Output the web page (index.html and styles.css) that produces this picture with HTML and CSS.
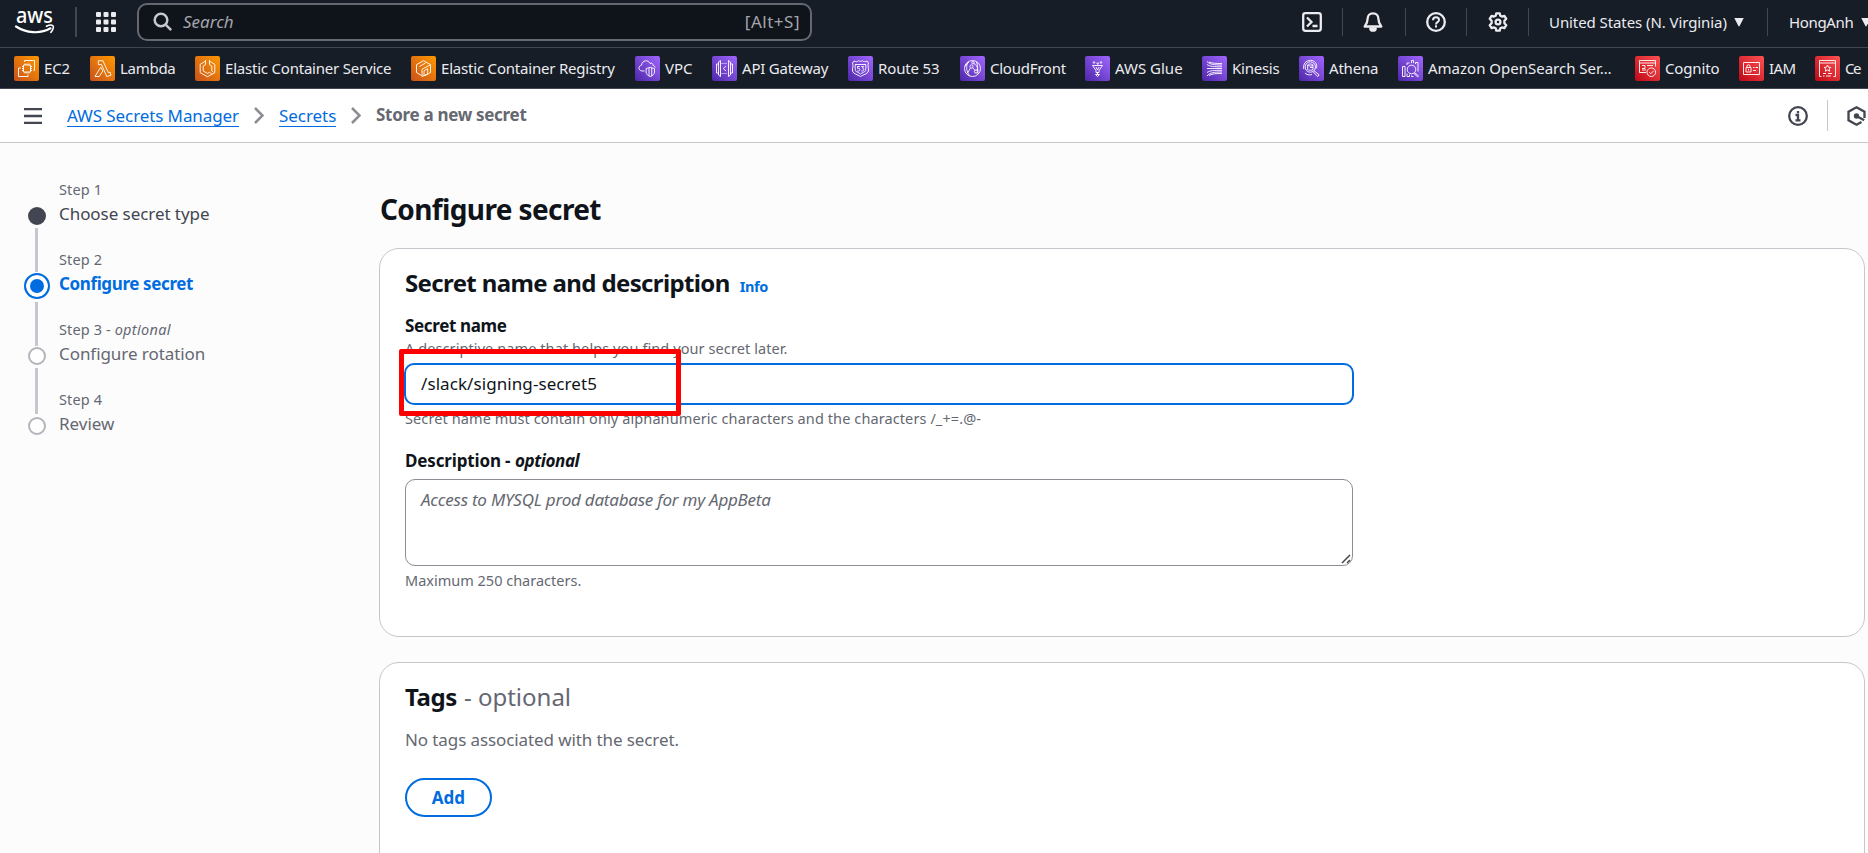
FILE: index.html
```
<!DOCTYPE html>
<html lang="en">
<head>
<meta charset="utf-8">
<title>Store a new secret | AWS Secrets Manager</title>
<link rel="stylesheet" href="styles.css">
</head>
<body>
<header class="topbar">
  <svg class="logo" width="41" height="28" viewBox="0 0 41 28"><text class="logo-text" x="1" y="15" textLength="37" lengthAdjust="spacingAndGlyphs">aws</text><path d="M1 18.5C11 25 25 26.500 35.500 20.300" fill="none" stroke="#fff" stroke-width="2.200" stroke-linecap="round"/><path d="M31.500 18.300C34 17 37 17 38 17.800S37.800 22.500 35.800 24.300" fill="none" stroke="#fff" stroke-width="1.600" stroke-linecap="round"/></svg>
  <span class="logo-divider"></span>
  <svg class="apps" width="20" height="20" viewBox="0 0 20 20" fill="#ebebf0"><rect width="5" height="5" rx="1"/><rect x="7.500" width="5" height="5" rx="1"/><rect x="15" width="5" height="5" rx="1"/><rect y="7.500" width="5" height="5" rx="1"/><rect x="7.500" y="7.500" width="5" height="5" rx="1"/><rect x="15" y="7.500" width="5" height="5" rx="1"/><rect y="15" width="5" height="5" rx="1"/><rect x="7.500" y="15" width="5" height="5" rx="1"/><rect x="15" y="15" width="5" height="5" rx="1"/></svg>
  <div class="search">
    <svg width="20" height="20" viewBox="0 0 20 20" fill="none" stroke="#c6c6cd" stroke-width="2.500"><circle cx="8" cy="8" r="6.300"/><path d="M12.600 12.600l5.600 5.600"/></svg>
    <span class="search-hint">Search</span>
    <span class="search-key">[Alt+S]</span>
  </div>
  <div class="tools">
    <span class="tool tool-shell"><svg width="20" height="20" viewBox="0 0 20 20" fill="none" stroke="#ebebf0" stroke-width="2.300"><rect x="1.200" y="1.200" width="17.600" height="17.600" rx="2.200"/><path d="M5 5.500l4.500 4.500L5 14.500M10.500 14h5"/></svg></span>
    <span class="tool tool-bell"><svg width="20" height="20" viewBox="0 0 20 20" fill="none" stroke="#ebebf0" stroke-width="2.300" stroke-linejoin="round"><path d="M10 1.300c-3.600 0-5.400 2.600-5.400 5.500 0 4-.8 5.200-2.900 7.700h16.600c-2.100-2.500-2.900-3.700-2.900-7.700 0-2.900-1.800-5.500-5.400-5.500z"/><path d="M7.300 16.500a2.700 2.200 0 0 0 5.400 0z"/></svg></span>
    <span class="tool tool-help"><svg width="20" height="20" viewBox="0 0 20 20" fill="none" stroke="#ebebf0" stroke-width="2.300"><circle cx="10" cy="10" r="8.800"/><path d="M7 8.200c0-1.900 1.300-2.900 3-2.900s3 1 3 2.600c0 2.200-3 2.200-3 4.500M10 13.300v2.200" stroke-width="2"/></svg></span>
    <span class="tool tool-gear"><svg width="20" height="20" viewBox="0 0 20 20" fill="none" stroke="#ebebf0" stroke-width="2.300" stroke-linejoin="round"><path d="M8.300 1.300h3.400l.6 2.400 1.600.9 2.500-.8 1.900 3-1.900 2v2.400l1.900 2-1.900 3-2.500-.8-1.600.9-.6 2.400H8.300l-.6-2.400-1.600-.9-2.500.8-1.900-3 1.900-2V8.800l-1.900-2 1.900-3 2.500.8 1.600-.9z"/><circle cx="10" cy="10" r="2.400"/></svg></span>
    <span class="tool tool-region"><span class="region-name">United States (N. Virginia)</span><svg width="10" height="9" viewBox="0 0 10 9" fill="#ebebf0"><path d="M.3 0h9.400L5.500 8.300h-1z"/></svg></span>
    <span class="tool tool-account"><span class="account-name">HongAnh</span><svg width="10" height="9" viewBox="0 0 10 9" fill="#ebebf0"><path d="M.3 0h9.400L5.500 8.300h-1z"/></svg></span>
  </div>
</header>

<nav class="services">
  <svg class="defs" width="0" height="0"><defs>
    <linearGradient id="orange" x1="0" y1="1" x2="1" y2="0"><stop offset="0" stop-color="#c8511b"/><stop offset="1" stop-color="#ff9900"/></linearGradient>
    <linearGradient id="purple" x1="0" y1="1" x2="1" y2="0"><stop offset="0" stop-color="#4d27a8"/><stop offset="1" stop-color="#a166ff"/></linearGradient>
    <linearGradient id="red" x1="0" y1="1" x2="1" y2="0"><stop offset="0" stop-color="#bd0816"/><stop offset="1" stop-color="#ff5252"/></linearGradient>
  </defs></svg>
  <span class="svc svc-ec2"><svg class="tile" viewBox="0 0 25 25"><rect width="25" height="25" rx="2" fill="url(#orange)"/><path d="M9.500 9h7v7h-7zM11 9V7.500M13 9V7.500M15 9V7.500M11 17.500V16M13 17.500V16M15 17.500V16M8 10.500h1.500M8 12.500h1.500M8 14.500h1.500M16.500 10.500H18M16.500 12.500H18M16.500 14.500H18M10.500 6V4.500h10v10H19.500M7 12H4.500v8.500H14V18.500"/></svg><span>EC2</span></span>
  <span class="svc svc-lambda"><svg class="tile" viewBox="0 0 25 25"><rect width="25" height="25" rx="2" fill="url(#orange)"/><path d="M8.300 4.700h4.600l5.500 12 1.600-.6 1 3-4.200 1.500-5.300-12H8.300zM10.700 11.200L5 20.500h4.200l3.700-5.600z"/></svg><span>Lambda</span></span>
  <span class="svc svc-ecs"><svg class="tile" viewBox="0 0 25 25"><rect width="25" height="25" rx="2" fill="url(#orange)"/><path d="M10.500 5.200L5.200 8.300v8.400l7.300 4 7.300-4M14.500 5.200l5.300 3.100v8.400M10.500 4v4.700L8.200 10v5l4.300 2.400 2-1.100M14.500 4v4.700l2.300 1.300v5l1.500 1.200M14.500 16.300l2.300 1.800"/></svg><span>Elastic Container Service</span></span>
  <span class="svc svc-ecr"><svg class="tile" viewBox="0 0 25 25"><rect width="25" height="25" rx="2" fill="url(#orange)"/><path d="M10.500 19.500l-5-3V8.700l7-4 7 4-8.500 4.600v7.200l2-.8v-5l3.700-2v5l-3.700 2M19.500 8.700v7.800l-5.500 3.200M8.500 10.500l6-3.500"/></svg><span>Elastic Container Registry</span></span>
  <span class="svc svc-vpc"><svg class="tile" viewBox="0 0 25 25"><rect width="25" height="25" rx="2" fill="url(#purple)"/><path d="M9.500 15H7c-4-.5-4-5-.5-5.800C7 4 13.500 3.300 15 7.500c1.600-1 3.200 0 3 2 1 .2 2 .8 2.200 2M15.300 11.300l4.200 1.300V16c0 2-1.700 3.600-4.200 4.600-2.500-1-4.200-2.600-4.200-4.600v-3.400zM14 12v8M16.700 12v8"/></svg><span>VPC</span></span>
  <span class="svc svc-api"><svg class="tile" viewBox="0 0 25 25"><rect width="25" height="25" rx="2" fill="url(#purple)"/><path d="M8.500 4.500v16L6.500 19V6zM16.500 4.500v16l2-1.500V6zM6.500 8H4.500v9h2M18.500 8h2v9h-2M14 10l-2.700 2.500L14 15"/><path d="M9.500 7.500h6M9.500 17.500h6" stroke-dasharray="1 1"/></svg><span>API Gateway</span></span>
  <span class="svc svc-r53"><svg class="tile" viewBox="0 0 25 25"><rect width="25" height="25" rx="2" fill="url(#purple)"/><path d="M6 5c2 1 3.500.8 4.500-.3 1.300.8 2.700.8 4 0C15.500 5.800 17 6 19 5l1.500 2c-1.500 3 .5 5 0 8-.8 3-5 3.500-8 5.500-3-2-7.200-2.500-8-5.500-.5-3 1.500-5 0-8zM7 8.500h11M7.500 8.500c-1 3 .3 4.500-.3 6 1 1.500 3.500 2 5.300 3.500 1.800-1.500 4.300-2 5.300-3.500-.6-1.500.7-3-.3-6M11.800 10.500H9.500v1.800h1.300c1.500 0 1.500 2.700-.3 2.700H9.200M13.300 10.500h2.200l-1 1.700c1.800 0 1.500 2.800-.2 2.800h-1"/></svg><span>Route 53</span></span>
  <span class="svc svc-cf"><svg class="tile" viewBox="0 0 25 25"><rect width="25" height="25" rx="2" fill="url(#purple)"/><circle cx="12.500" cy="12.500" r="8"/><circle cx="11.500" cy="10.500" r="1.600"/><circle cx="16" cy="15.500" r="1.600"/><circle cx="13" cy="6.700" r="1.200"/><path d="M8 6c-2 4-2 9 1.500 13.500M10.500 12l-3 5M12.500 11.700l2.600 2.700M14 7.500c3 2 4.500 5 3.700 10M5 10l4-4M17 15c1-3 .5-6-.5-9"/></svg><span>CloudFront</span></span>
  <span class="svc svc-glue"><svg class="tile" viewBox="0 0 25 25"><rect width="25" height="25" rx="2" fill="url(#purple)"/><path d="M7.500 9.500h10l-3.500 5v2h-3v-2zM12.500 16.500V19M10.500 18.500h4l-2 2z"/><circle cx="9" cy="6.500" r=".8"/><circle cx="12.700" cy="7.500" r=".8"/><circle cx="16" cy="6.500" r=".8"/><path d="M11 11l1.500 3 1.500-3"/></svg><span>AWS Glue</span></span>
  <span class="svc svc-kin"><svg class="tile" viewBox="0 0 25 25"><rect width="25" height="25" rx="2" fill="url(#purple)"/><path d="M5 5.500c3 3 7 3.500 15 3.500M5 8.500c3 2 7 2.300 15 2.300M5 12.500h15M5 16.500c3-2 7-2.200 15-2.200M5 20c3-3.500 7-4 15-4M7 6c4 1.500 7 1.500 13 1.500M7 19.500c4-2 7-2 13-2"/></svg><span>Kinesis</span></span>
  <span class="svc svc-ath"><svg class="tile" viewBox="0 0 25 25"><rect width="25" height="25" rx="2" fill="url(#purple)"/><circle cx="11.300" cy="11" r="5.200"/><path d="M15 14.700l5.200 4.200-1.600 1.600-4.600-4.800M4.700 13c-1-5 2.300-8.700 6.800-8.700 4.500 0 7.200 4 6 8M6 17c2 2 5 2.300 7 1.500"/><ellipse cx="11.300" cy="9" rx="2.700" ry="1"/><path d="M8.600 9v4.500c1 1 4.400 1 5.400 0V9M11 11.500h3"/></svg><span>Athena</span></span>
  <span class="svc svc-os"><svg class="tile" viewBox="0 0 25 25"><rect width="25" height="25" rx="2" fill="url(#purple)"/><circle cx="13.500" cy="13.500" r="4.300"/><path d="M16.600 16.700l4 3.200-1 1-3.700-3.500M4.500 10.500h2.500v10H4.500zM9 9V7h2.500M13.500 7V4.500h2V7M17.500 8V6.500h2.500v9M9 17.500v3h2.500v-2M13.500 19.500v1h2"/></svg><span>Amazon OpenSearch Ser…</span></span>
  <span class="svc svc-cog"><svg class="tile" viewBox="0 0 25 25"><rect width="25" height="25" rx="2" fill="url(#red)"/><path d="M11 16.500H4.500v-12h16v6M4.500 7h16M7 9.500h3v3H7M12 9.500h6M7 14h4"/><circle cx="16.300" cy="16.200" r="4.300"/><path d="M14.200 16.200l1.600 1.600 2.800-3"/></svg><span>Cognito</span></span>
  <span class="svc svc-iam"><svg class="tile" viewBox="0 0 25 25"><rect width="25" height="25" rx="2" fill="url(#red)"/><path d="M4.500 6.500h16v12h-16zM7 11.500h5v4.500H7zM8 11.500V10c0-1.700 3-1.700 3 0v1.500M9.500 13v1.500M14 11.500h1.500M16.500 11.500H19M14 14.500h3"/></svg><span>IAM</span></span>
  <span class="svc svc-cert"><svg class="tile" viewBox="0 0 25 25"><rect width="25" height="25" rx="2" fill="url(#red)"/><path d="M6.500 20.500h-2v-16h16v16h-2M4.500 7h16M12.500 9l1 2.200 2.400.2-1.800 1.600.6 2.300-2.200-1.300-2.200 1.300.6-2.300L9.100 11.400l2.400-.2zM8 17.500h3M13 17.500h4M8 20h1.500M11 20h5"/></svg><span>Ce</span></span>
</nav>

<div class="crumbbar">
  <svg class="menu" width="18" height="16" viewBox="0 0 18 16"><path d="M0 1.200h18M0 8h18M0 14.800h18" stroke="#424650" stroke-width="2.300"/></svg>
  <a class="crumb crumb-root">AWS Secrets Manager</a>
  <svg class="chev" width="10" height="17" viewBox="0 0 10 17"><path d="M1 1l7.500 7.500L1 16" fill="none" stroke="#8c8c94" stroke-width="2.500"/></svg>
  <a class="crumb crumb-mid">Secrets</a>
  <svg class="chev" width="10" height="17" viewBox="0 0 10 17"><path d="M1 1l7.500 7.500L1 16" fill="none" stroke="#8c8c94" stroke-width="2.500"/></svg>
  <span class="crumb-current">Store a new secret</span>
  <div class="panel-tools">
    <svg width="20" height="20" viewBox="0 0 20 20" fill="none" stroke="#424650" stroke-width="2.300"><circle cx="10" cy="10" r="8.800"/><path d="M7.500 9H10v5.500M7.500 14.300h5M10 5v2.300"/></svg>
    <span class="panel-divider"></span>
    <svg width="19" height="20" viewBox="0 0 19 20" fill="none" stroke="#424650" stroke-width="2.300"><path d="M17.500 12V5.700L9.500 1.300l-8 4.400v8.600l8 4.400 5-2.700"/><circle cx="9.500" cy="10" r="2.700" fill="#424650" stroke="none"/><path d="M9.500 10l7.700 4.300"/></svg>
  </div>
</div>

<div class="page">
  <ol class="steps">
    <li class="step step-done"><span class="rail"><i class="dot"></i><i class="line"></i></span><span class="step-body"><small>Step 1</small><b>Choose secret type</b></span></li>
    <li class="step step-active"><span class="rail"><i class="dot"></i><i class="line"></i></span><span class="step-body"><small>Step 2</small><b>Configure secret</b></span></li>
    <li class="step"><span class="rail"><i class="dot"></i><i class="line"></i></span><span class="step-body"><small>Step 3 - <em>optional</em></small><b>Configure rotation</b></span></li>
    <li class="step"><span class="rail"><i class="dot"></i></span><span class="step-body"><small>Step 4</small><b class="review">Review</b></span></li>
  </ol>
  <main class="content">
    <h1>Configure secret</h1>
    <section class="card card-name">
      <h2><span>Secret name and description</span><a class="info">Info</a></h2>
      <div class="label">Secret name</div>
      <div class="hint">A descriptive name that helps you find your secret later.</div>
      <div class="input"><span>/slack/signing-secret5</span><div class="marker"></div></div>
      <div class="hint constraint">Secret name must contain only alphanumeric characters and the characters /_+=.@-</div>
      <div class="label label-desc"><span>Description - </span><em>optional</em></div>
      <div class="textarea"><span>Access to MYSQL prod database for my AppBeta</span><svg class="grip" width="10" height="10" viewBox="0 0 10 10"><path d="M1 9l8-8M6 9l3-3" stroke="#444" stroke-width="1.500"/></svg></div>
      <div class="hint maximum">Maximum 250 characters.</div>
    </section>
    <section class="card card-tags">
      <h2><span class="tags-title">Tags</span><span class="tags-opt">- optional</span></h2>
      <p class="empty">No tags associated with the secret.</p>
      <span class="btn">Add</span>
    </section>
  </main>
</div>
</body>
</html>
```
FILE: styles.css
```
* { box-sizing: border-box; }
body {
  margin: 0; height: 853px; overflow: hidden; background: #fcfcfd; color: #0f141a;
  font: 17px/24px "Noto Sans", "Open Sans", sans-serif; white-space: nowrap;
}
svg { flex: none; display: block; }

.topbar { display: flex; align-items: center; height: 48px; padding: 0 0 3px 15px; background: #161d26; border-bottom: 1px solid #424650; overflow: hidden; }
.logo { overflow: visible; }
.logo-text { font: 500 21px "Noto Sans", sans-serif; fill: #fff; }
.logo-divider { width: 2px; height: 30px; margin-left: 19px; background: #424650; flex: none; }
.apps { margin-left: 19px; }
.search { display: flex; align-items: center; flex: none; width: 675px; height: 38px; margin-left: 21px; padding: 0 10px 0 14px; border: 2px solid #656871; border-radius: 10px; background: #0f141a; }
.search-hint { margin-left: 10px; font-style: italic; color: #a4a4ad; }
.search-key { margin-left: auto; color: #a4a4ad; letter-spacing: .5px; }
.tools { display: flex; align-items: center; margin-left: 460px; color: #ebebf0; font-size: 15px; }
.tool { display: flex; align-items: center; height: 28px; flex: none; }
.tool + .tool { border-left: 1px solid #424650; }
.tool-shell { width: 70px; padding-left: 30px; }
.tool-bell { width: 63px; padding-left: 20px; }
.tool-help { width: 61px; padding-left: 20px; }
.tool-gear { width: 62px; padding-left: 21px; }
.tool-region { width: 239px; padding-left: 20px; }
.region-name { width: 178px; letter-spacing: -.08px; margin-right: 7px; }
.tool-account { padding-left: 21px; }
.account-name { width: 64px; margin-right: 8px; letter-spacing: -.35px; }

.services { display: flex; align-items: center; height: 41px; width: 1868px; padding-left: 14px; padding-right: 8px; background: #161d26; border-bottom: 1px solid #424650; color: #ebebf0; font-size: 15px; }
.defs { position: absolute; }
.svc { display: flex; align-items: center; gap: 5px; flex: none; }
.tile { width: 25px; height: 25px; fill: none; stroke: #fff; stroke-width: 1; stroke-opacity: .9; }
.tile rect { stroke: none; }
.svc-ec2 { width: 76px; letter-spacing: -.1px; }
.svc-lambda { width: 105px; letter-spacing: -.28px; }
.svc-ecs { width: 216px; letter-spacing: -.21px; }
.svc-ecr { width: 224px; letter-spacing: -.2px; }
.svc-vpc { width: 77px; }
.svc-api { width: 136px; letter-spacing: -.2px; }
.svc-r53 { width: 112px; letter-spacing: -.14px; }
.svc-cf { width: 125px; letter-spacing: -.25px; }
.svc-glue { width: 117px; }
.svc-kin { width: 97px; letter-spacing: -.25px; }
.svc-ath { width: 99px; letter-spacing: -.2px; }
.svc-os { width: 237px; }
.svc-cog { width: 104px; letter-spacing: -.15px; }
.svc-iam { width: 76px; letter-spacing: -.6px; }
.svc-cert { width: 45px; letter-spacing: -1.5px; }

.crumbbar { display: flex; align-items: center; height: 54px; padding: 0 2px 0 24px; background: #fff; border-bottom: 1px solid #c6c6cd; }
.crumb { color: #006ce0; line-height: 21px; border-bottom: 1px solid #006ce0; height: 22px; }
.crumb-root { width: 172px; margin-left: 25px; letter-spacing: -.1px; }
.crumb-mid { width: 57px; letter-spacing: -.05px; }
.chev { margin: 0 15px; }
.crumb-current { color: #656871; font-weight: 700; letter-spacing: -.3px; line-height: 22px; padding-bottom: 2px; }
.panel-tools { display: flex; align-items: center; margin-left: auto; }
.panel-divider { width: 1px; height: 31px; margin: 0 19px; background: #c6c6cd; }

.page { display: flex; }
.steps { width: 379px; margin: 0; padding: 36px 0 0 24px; list-style: none; flex: none; }
.step { display: flex; height: 70px; color: #656871; }
.rail { display: flex; flex-direction: column; align-items: center; width: 25px; padding-top: 28px; margin-right: 10px; }
.dot { flex: none; width: 18px; height: 18px; border: 2.500px solid #b4b4bb; border-radius: 50%; background: #fff; }
.line { width: 3px; height: 46px; margin-top: 3px; flex: none; background: #c6c6cd; }
.step-done .dot { background: #424650; border-color: #424650; }
.step-done .line { height: 44px; }
.step-done b { color: #424650; }
.step-active .rail { padding-top: 24px; }
.step-active .dot { width: 26px; height: 26px; border-color: #006ce0; background: #006ce0; box-shadow: inset 0 0 0 4px #fff; }
.step-active .line { height: 44px; }
.step-body { display: flex; flex-direction: column; }
.step small { font-size: 14.500px; line-height: 20px; height: 23px; letter-spacing: .12px; }
.step em { letter-spacing: .3px; }
.step b { font-weight: 400; letter-spacing: -.06px; }
.step-active b { color: #006ce0; font-weight: 700; letter-spacing: -.38px; }
.step .review { letter-spacing: 0; }

.content { width: 1486px; padding-top: 49px; }
h1 { margin: 0 0 22px; padding-left: 1px; font-size: 28px; line-height: 34px; letter-spacing: -.62px; }
.card { border: 1px solid #c6c6cd; border-radius: 20px; background: #fff; padding: 19px 25px 0; }
.card-name { height: 389px; }
h2 { display: flex; align-items: baseline; margin: 0; font-size: 24px; line-height: 30px; letter-spacing: -.63px; }
.info { margin-left: 10px; font-size: 14.500px; letter-spacing: -.4px; color: #006ce0; }
.label { margin-top: 13px; font-weight: 700; line-height: 24px; letter-spacing: -.35px; }
.hint { color: #656871; font-size: 14.500px; line-height: 20px; letter-spacing: .09px; }
.input { position: relative; width: 950px; height: 42px; margin: 5px 0 0 -1px; padding: 8px 15px; border: 2px solid #006ce0; border-radius: 10px; line-height: 22px; letter-spacing: .08px; }
.marker { position: absolute; left: -7px; top: -16px; width: 282px; height: 67px; border: 5.500px solid #f00; border-radius: 2px; }
.constraint { margin-top: 3px; letter-spacing: .1px; }
.label-desc { margin-top: 21px; display: flex; letter-spacing: -.15px; }
.label-desc span { width: 111px; white-space: pre; }
.label-desc em { margin-left: -1px; letter-spacing: -.4px; }
.textarea { position: relative; width: 948px; height: 87px; margin-top: 6px; padding: 8px 15px; border: 1px solid #8c8c94; border-radius: 10px; color: #656871; font-style: italic; letter-spacing: -.23px; }
.grip { position: absolute; right: 1px; bottom: 1px; }
.maximum { margin-top: 4px; letter-spacing: 0; }
.card-tags { margin-top: 25px; height: 230px; }
.tags-title { letter-spacing: -.4px; }
.tags-opt { margin-left: 7px; font-weight: 400; color: #656871; letter-spacing: 0; }
.empty { margin: 16px 0 0; color: #656871; letter-spacing: -.1px; }
.btn { display: flex; align-items: center; justify-content: center; width: 87px; height: 39px; margin-top: 26px; border: 2px solid #006ce0; border-radius: 20px; color: #006ce0; font-weight: 700; }
```
